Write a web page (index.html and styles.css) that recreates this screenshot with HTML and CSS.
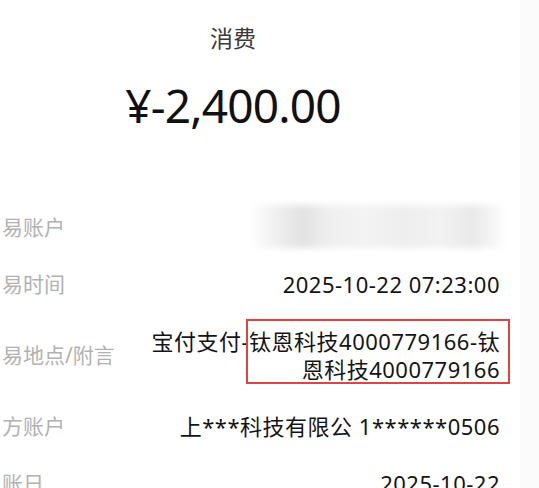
FILE: index.html
```html
<!DOCTYPE html>
<html lang="zh-CN">
<head>
    <meta charset="UTF-8">
    <meta name="viewport" content="width=device-width, initial-scale=1.0">
    <title>账单详情</title>
    <link rel="stylesheet" href="styles.css">
</head>
<body>
    <div class="sheet">
        <div class="head">
            <div class="kind">消费</div>
            <div class="amount">¥-2,400.00</div>
        </div>

        <div class="rows">
            <div class="row">
                <span class="label">易账户</span>
                <span class="value masked"></span>
            </div>
            <div class="row">
                <span class="label">易时间</span>
                <span class="value">2025-10-22 07:23:00</span>
            </div>
            <div class="row">
                <span class="label">易地点/附言</span>
                <span class="value note">宝付支付-钛恩科技4000779166-钛恩科技4000779166<span class="mark"></span></span>
            </div>
            <div class="row">
                <span class="label">方账户</span>
                <span class="value">上***科技有限公 1******0506</span>
            </div>
            <div class="row">
                <span class="label">账日</span>
                <span class="value">2025-10-22</span>
            </div>
        </div>
    </div>
</body>
</html>
```

FILE: styles.css
```css
body {
    margin: 0;
    background: #fbfbfb;
    font-family: "Noto Sans", "Noto Sans CJK SC", sans-serif;
    overflow: hidden;
}
.sheet {
    width: 520px;
    height: 488px;
    background: #fff;
}
.head {
    width: 466px;
    text-align: center;
    padding-top: 22px;
}
.kind {
    font-size: 23px;
    line-height: 32px;
    color: #3a3a3a;
}
.amount {
    margin-top: 23px;
    font-size: 46px;
    line-height: 56px;
    letter-spacing: -0.8px;
    color: #111;
}
.rows {
    padding-top: 65px;
}
.row {
    display: flex;
    justify-content: space-between;
    align-items: center;
    padding: 14.5px 20px 14.5px 2px;
}
.label {
    font-size: 21px;
    line-height: 28px;
    color: #b2b2b2;
    white-space: nowrap;
}
.value {
    font-size: 22px;
    line-height: 28px;
    letter-spacing: 0.5px;
    color: #141414;
    text-align: right;
}
.masked {
    width: 250px;
    height: 43px;
    margin: -7.5px -3px -7.5px 0;
    background: linear-gradient(to right, #fdfdfd 0%, #ececec 12%, #e2e2e2 20%, #efefef 30%, #f3f3f3 45%, #eeeeee 60%, #f2f2f2 75%, #e9e9e9 88%, #fcfcfc 100%);
    filter: blur(3px);
}
.note {
    position: relative;
    max-width: 360px;
}
/* red frame drawn over the end of the note */
.mark {
    position: absolute;
    right: -10px;
    top: -8px;
    bottom: -1px;
    width: 264px;
    border: 2.5px solid #dc4543;
    box-sizing: border-box;
}
```
